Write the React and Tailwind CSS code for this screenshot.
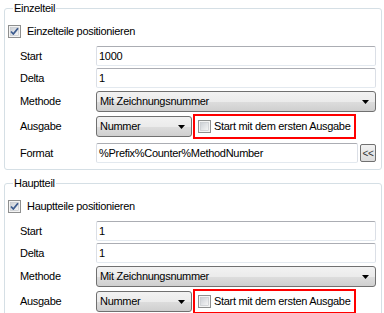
const font = { fontFamily: '"Liberation Sans", Arial, sans-serif' };

const CheckBox = ({ checked }) => (
  <svg width="13" height="13" viewBox="0 0 13 13" className="shrink-0">
    <defs>
      <linearGradient id={checked ? 'cbOn' : 'cbOff'} x1="0" y1="0" x2="1" y2="1">
        <stop offset="0" stopColor="#cbcfd5" />
        <stop offset="1" stopColor="#f7f7f7" />
      </linearGradient>
    </defs>
    <rect x="0.5" y="0.5" width="12" height="12" fill="#f4f4f4" stroke="#8e8f8f" />
    <rect x="2.5" y="2.5" width="8" height="8" fill={`url(#${checked ? 'cbOn' : 'cbOff'})`} stroke="#c0c3c8" strokeWidth="0.6" />
    {checked && (
      <path d="M3 6.5 L5.3 9 L10 3.2" fill="none" stroke="#3d5c8f" strokeWidth="1.8" strokeLinejoin="round" />
    )}
  </svg>
);

const TextBox = ({ value, className = '' }) => (
  <div className={`h-[20px] flex items-center pl-[2px] rounded-[2px] border border-t-[#abadb3] border-x-[#dbdfe6] border-b-[#e3e9ef] bg-white ${className}`}>
    {value}
  </div>
);

const Combo = ({ value, className = '' }) => (
  <div className={`h-[21px] flex items-center justify-between pl-[3px] pr-[6px] rounded-[3px] border border-[#707070] bg-[linear-gradient(#f2f2f2_0%,#ebebeb_50%,#dddddd_51%,#cfcfcf_100%)] ${className}`}>
    <span>{value}</span>
    <svg width="7" height="4" viewBox="0 0 7 4"><path d="M0 0 H7 L3.5 4 Z" fill="#000" /></svg>
  </div>
);

const Row = ({ label, children, className = '' }) => (
  <div className={`flex items-center ${className}`}>
    <div className="w-[76px] shrink-0">{label}</div>
    {children}
  </div>
);

const Group = ({ title, checkLabel, start, showFormat = true }) => (
  <div className="relative ml-[4px] w-[378px] border border-[#d5dfe5] rounded-[3px] pl-[15px] pr-[5px] pb-[6px]">
    {/* legend over the top border */}
    <div className="absolute -top-[8px] left-[8px] px-[1px] bg-white leading-[14px]">{title}</div>

    <div className="flex items-center h-[16px] mt-[14px] -ml-[12px] gap-[6px]">
      <CheckBox checked />
      <span>{checkLabel}</span>
    </div>

    <Row label="Start" className="mt-[7px] h-[20px]">
      <TextBox value={start} className="flex-1" />
    </Row>
    <Row label="Delta" className="mt-[2px] h-[20px]">
      <TextBox value="1" className="flex-1" />
    </Row>
    <Row label="Methode" className="mt-[3px] h-[21px]">
      <Combo value="Mit Zeichnungsnummer" className="flex-1" />
    </Row>
    <Row label="Ausgabe" className="mt-[2px] h-[25px]">
      <Combo value="Nummer" className="w-[96px]" />
      <div className="ml-[1px] w-[163px] h-[25px] border-2 border-[#ff0000] flex items-center pl-[3px] gap-[3px]">
        <CheckBox checked={false} />
        <span>Start mit dem ersten Ausgabe</span>
      </div>
    </Row>
    {showFormat && (
      <Row label="Format" className="mt-[4px] h-[20px]">
        <TextBox value="%Prefix%Counter%MethodNumber" className="w-[262px]" />
        <div className="ml-[2px] w-[16px] h-[18px] rounded-[2px] border border-[#707070] bg-[linear-gradient(#f2f2f2,#dcdcdc)] flex items-center justify-center text-[10px] text-[#333]">
          &lt;&lt;
        </div>
      </Row>
    )}
  </div>
);

export default function App() {
  return (
    <div className="w-[384px] h-[313px] overflow-hidden bg-white text-black text-[11px] tracking-[-0.3px]" style={font}>
      <div className="pt-[8px]">
        <Group title="Einzelteil" checkLabel="Einzelteile positionieren" start="1000" />
      </div>
      <div className="mt-[13px]">
        <Group title="Hauptteil" checkLabel="Hauptteile positionieren" start="1" showFormat={false} />
      </div>
    </div>
  );
}
